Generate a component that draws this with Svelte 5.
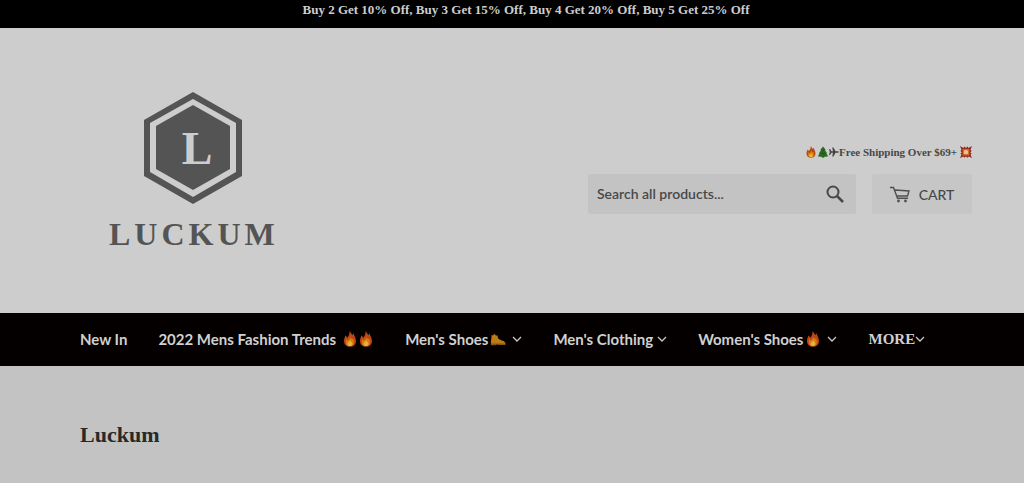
<script>
  const links = [
    { label: 'New In' },
    { label: '2022 Mens Fashion Trends', icons: ['fire', 'fire'], spaced: true },
    { label: "Men's Shoes", icons: ['boot'], menu: true },
    { label: "Men's Clothing", menu: true },
    { label: "Women's Shoes", icons: ['fire'], menu: true },
    { label: 'MORE', menu: true, serif: true }
  ];
</script>

{#snippet fire()}
  <svg class="emoji" viewBox="0 0 16 16" aria-hidden="true">
    <path fill="#bd4612" d="M7.600 0C8.800 1.500 9 2.500 10.600 4.100C11.300 3.400 11 2.500 11.600 1.900C11.700 4 14 6.500 14 10C14 13.700 11.300 15.800 8 15.800S2 13.600 2 9.900C2 7.800 3 6.300 3.400 4.600C4.400 5.200 4.700 6 5 6.700C6.700 5.100 7.900 2.900 7.600 0Z" />
    <path fill="#d67a16" d="M8.500 5.500C8.300 7.500 10.500 8.500 11 7.500C12.100 9.500 12.300 11.500 11.500 13C10.700 14.500 9.400 15 8 15C5.500 15 3.800 13.500 3.800 11C3.800 9.500 4.500 8.500 4.600 8C5.200 8.500 5.300 9.300 5.700 9.500C7 8.500 8.200 7 8.500 5.500Z" />
    <path fill="#e0b735" d="M8.200 9.300C8.500 10.500 10.500 11.300 10.500 13C10.500 14.300 9.400 15 8 15S5.500 14.200 5.500 12.900C5.500 11.500 7.500 11 8.200 9.300Z" />
  </svg>
{/snippet}

{#snippet boot()}
  <svg class="emoji" viewBox="0 0 16 16" aria-hidden="true">
    <path fill="#b97c17" d="M1.500 4L3 4.500L4.500 2.800L6 4.700L7.500 4.200C7.500 6.500 8.200 7.700 10 8.700C12 9.700 15.500 9.800 15.500 13H1C.5 9.500 1.900 7 1.500 4Z" />
    <path fill="#885609" d="M.8 12.500H15.500V14H8L7 13.300L6 14.300H.8Z" />
  </svg>
{/snippet}

<div class="page">
  <p class="announcement">Buy 2 Get 10% Off, Buy 3 Get 15% Off, Buy 4 Get 20% Off, Buy 5 Get 25% Off</p>

  <header class="header">
    <a class="logo" href="/" aria-label="Luckum">
      <svg viewBox="0 0 200 180">
        <path fill="#545454" d="M103 12L152 40V96L103 124L54 96V40Z" />
        <path fill="#cdcdcd" d="M103 19L146 43V92L103 117L60 92V43Z" />
        <path fill="#545454" d="M103 25L140 46V89L103 110L66 89V46Z" />
        <text class="initial" x="107" y="84" text-anchor="middle">L</text>
        <text class="wordmark" x="19" y="165">LUCKUM</text>
      </svg>
    </a>

    <div class="tools">
      <p class="shipping">
        {@render fire()}<svg class="emoji" viewBox="0 0 16 16" aria-hidden="true">
          <path fill="#70451d" d="M6.500 12H9.500V15.500H6.500Z" />
          <path fill="#286b20" d="M8 .5L11.500 5L10.700 5.600L13.500 9.500L12.500 10L15 13.500Q8 15.500 1 13.500L3.500 10L2.500 9.500L5.300 5.600L4.500 5Z" />
          <path fill="none" stroke="#174f14" d="M4.500 9.800Q8 11 11.500 9.500M6 5.500Q8 6.500 10 5.300" />
        </svg><svg class="plane" viewBox="0 0 10 12" aria-hidden="true">
          <path fill="#444" d="M0 3H1L2.500 5.300H4L3.200 1.500H4.400L6.600 5.300H8.500Q10 5.400 10 6T8.500 6.700H6.600L4.400 10.500H3.200L4 6.700H2.500L1 9H0L.8 6Z" />
        </svg><span>Free Shipping Over $69+</span>
        <svg class="emoji burst" viewBox="0 0 16 16" aria-hidden="true">
          <path fill="#8f2418" d="M0 0L4.500 2.500L6 .5L8 2.600L10 .5L11.500 2.500L16 0L14 5L15.500 6.500L13.500 8.300L15.500 10L14 11.500L16 16L11.500 14L10 15.500L8 13.500L6 15.500L4.500 14L0 16L2 11.500L.5 10L2.500 8.300L.5 6.500L2 5Z" />
          <path fill="#d2662c" d="M3.500 4L8 3.500L12.500 4L12.500 8L12.500 12.500L8 12.500L3.500 12.500L3.500 8Z" />
          <path fill="#e3c18b" d="M5.500 6L8 5.300L10.500 6L11 8L10.500 10.500L8 11L5.500 10.500L5 8Z" />
        </svg>
      </p>
      <div class="actions">
        <form class="search" role="search">
          <input type="search" placeholder="Search all products..." aria-label="Search all products" />
          <button type="submit" aria-label="Search">
            <svg viewBox="0 0 18 18" fill="none" stroke="#484848">
              <circle cx="7" cy="7" r="5.500" stroke-width="2" />
              <path stroke-width="2.500" d="M11 11L17 17" />
            </svg>
          </button>
        </form>
        <a class="cart" href="/cart">
          <svg viewBox="0 0 20 17" aria-hidden="true">
            <path fill="none" stroke="#505050" stroke-width="1.400" d="M0 1.500H3.500L7.500 12.200H18M5 4L19 5L17.500 10H7" />
            <circle cx="8.500" cy="15" r="1.400" fill="#505050" />
            <circle cx="15.500" cy="15" r="1.400" fill="#505050" />
          </svg>
          <span>CART</span>
        </a>
      </div>
    </div>
  </header>

  <nav class="nav" aria-label="Main">
    <ul>
      {#each links as link}
        <li>
          <a href="/" class:serif={link.serif}>
            <span>{link.label}</span>
            {#if link.icons}
              <span class="icons" class:spaced={link.spaced}>
                {#each link.icons as icon}
                  {#if icon === 'fire'}{@render fire()}{:else}{@render boot()}{/if}
                {/each}
              </span>
            {/if}
            {#if link.menu}
              <svg class="chevron" class:apart={link.icons} viewBox="0 0 10 10" aria-hidden="true">
                <path fill="none" stroke="#c8c8c8" stroke-width="1.300" d="M1 3L5 7L9 3" />
              </svg>
            {/if}
          </a>
        </li>
      {/each}
    </ul>
  </nav>

  <main>
    <h1>Luckum</h1>
  </main>
</div>

<style>
  :global(body) {
    margin: 0;
    background: #c3c3c3;
  }

  .page {
    font-family: Lato, sans-serif;
    color: #484848;
  }

  .announcement {
    margin: 0;
    padding: 2px 0 10px 28px;
    background: #000;
    color: #cdcdcd;
    font: bold 13px/16px "Liberation Serif", serif;
    text-align: center;
  }

  .header {
    display: flex;
    align-items: center;
    justify-content: space-between;
    padding: 52px 52px 53px 90px;
    background: #cdcdcd;
  }

  .logo svg {
    display: block;
    width: 200px;
    height: 180px;
  }

  .initial,
  .wordmark {
    font-family: "Liberation Serif", serif;
    font-weight: bold;
  }

  .initial {
    fill: #cdcdcd;
    font-size: 46px;
  }

  .wordmark {
    fill: #545454;
    font-size: 32px;
    letter-spacing: 4px;
  }

  .tools {
    display: flex;
    flex-direction: column;
    gap: 14px;
    width: 384px;
    padding-top: 18px;
  }

  .shipping {
    display: flex;
    align-items: center;
    justify-content: flex-end;
    margin: 0;
    font: bold 11px/16px "Liberation Serif", serif;
  }

  .emoji {
    width: 12px;
    height: 12px;
  }

  .burst {
    margin-left: 3px;
  }

  .plane {
    width: 10px;
    height: 12px;
  }

  .actions {
    display: flex;
    gap: 16px;
  }

  .search {
    display: flex;
    flex: 1;
    min-width: 0;
    height: 40px;
    border-radius: 2px;
    background: #c3c3c3;
  }

  .search input {
    flex: 1;
    min-width: 0;
    padding: 0 9px;
    border: 0;
    background: none;
    font: 600 14px/20px Lato, sans-serif;
  }

  .search input::placeholder {
    color: #484848;
    opacity: 1;
  }

  .search button {
    display: grid;
    place-items: center;
    width: 42px;
    padding: 0;
    border: 0;
    background: none;
  }

  .search button svg {
    width: 18px;
    height: 18px;
  }

  .cart {
    display: flex;
    align-items: center;
    justify-content: center;
    gap: 9px;
    width: 100px;
    border-radius: 2px;
    background: #c6c6c6;
    color: #484848;
    font-size: 14px;
    font-weight: 500;
    text-decoration: none;
  }

  .cart svg {
    width: 20px;
    height: 17px;
  }

  .nav {
    background: #040000;
  }

  .nav ul {
    display: flex;
    gap: 31px;
    margin: 0;
    padding: 0 80px 1px;
    list-style: none;
  }

  .nav a {
    display: flex;
    align-items: center;
    height: 52px;
    color: #d0d0d0;
    font-size: 15px;
    font-weight: bold;
    text-decoration: none;
    white-space: nowrap;
  }

  .nav a.serif {
    font-family: "Liberation Serif", serif;
  }

  .icons {
    display: flex;
    margin-left: 2px;
  }

  .icons.spaced {
    margin-left: 6px;
  }

  .nav .emoji {
    width: 16px;
    height: 16px;
  }

  .chevron {
    width: 10px;
    height: 10px;
    margin-left: 4px;
  }

  .chevron.apart {
    margin-left: 6px;
  }

  .serif .chevron {
    margin-left: 0;
  }

  main {
    padding: 56px 80px 36px;
  }

  h1 {
    margin: 0;
    color: #292929;
    font: bold 22px/26px "Liberation Serif", serif;
  }
</style>
